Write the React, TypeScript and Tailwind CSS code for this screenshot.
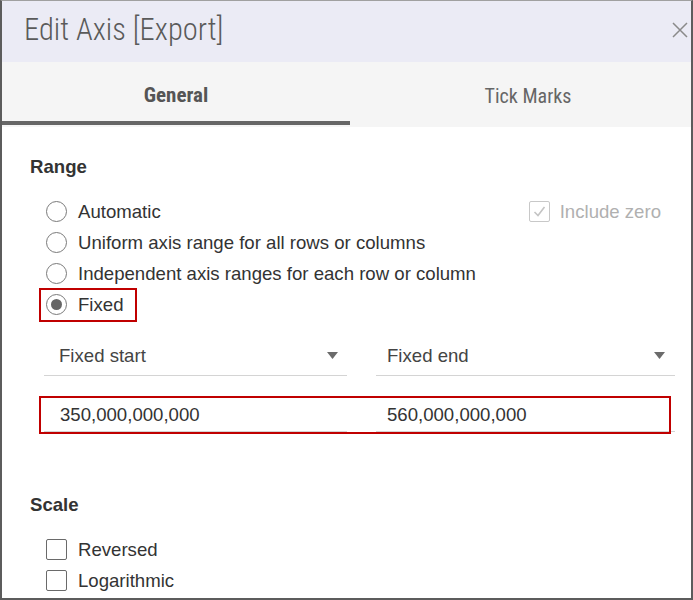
const body = { fontFamily: '"Liberation Sans", Arial, sans-serif' };
const narrow = { fontFamily: '"Liberation Sans Narrow", "Roboto Condensed", Roboto, sans-serif' };

function Radio({ checked }: { checked?: boolean }) {
  return (
    <span className="w-[21px] h-[21px] rounded-full border-[1.5px] border-[#7a7a7a] bg-white flex items-center justify-center shrink-0">
      {checked ? <span className="w-[11px] h-[11px] rounded-full bg-[#666]"></span> : null}
    </span>
  );
}

function Checkbox({ disabled, checked }: { disabled?: boolean; checked?: boolean }) {
  return (
    <span
      className={`w-[21px] h-[21px] rounded-[2px] border-[1.5px] bg-white flex items-center justify-center shrink-0 ${
        disabled ? "border-[#c8c8c8]" : "border-[#6a6a6a]"
      }`}
    >
      {checked ? (
        <svg width="15" height="15" viewBox="0 0 15 15" fill="none">
          <path d="M2.5 8 L6 11.5 L12.5 3" stroke={disabled ? "#c4c4c4" : "#555"} strokeWidth="1.6" />
        </svg>
      ) : null}
    </span>
  );
}

function Caret() {
  return (
    <svg width="11" height="7" viewBox="0 0 11 7">
      <path d="M0 0 L11 0 L5.5 7 Z" fill="#6b6b6b" />
    </svg>
  );
}

export default function App() {
  const radios = [
    "Automatic",
    "Uniform axis range for all rows or columns",
    "Independent axis ranges for each row or column",
  ];

  return (
    <div
      className="w-[693px] h-[600px] bg-white border-2 border-t border-[#5c5c5c] border-t-[#a0a0a0] overflow-hidden flex flex-col"
      style={body}
    >
      {/* header */}
      <div className="h-[61px] bg-[#ebebf5] flex items-center justify-between pl-[22px] pr-[3px] shrink-0">
        <p className="text-[30.5px] font-light text-[#5a5a5a] leading-none -mt-[2px]" style={narrow}>
          Edit Axis [Export]
        </p>
        <svg width="16" height="16" viewBox="0 0 16 16" className="-mt-[4px]">
          <path d="M1 1 L15 15 M15 1 L1 15" stroke="#8a8a8a" strokeWidth="1.5" />
        </svg>
      </div>

      {/* tabs */}
      <div className="h-[65px] bg-[#f5f5f5] flex shrink-0 overflow-hidden">
        <div className="w-[348px] shrink-0 relative flex items-center justify-center">
          <p className="text-[21px] font-bold text-[#555] mt-[2px]" style={narrow}>
            General
          </p>
          <div className="absolute left-0 right-0 bottom-[2px] h-[4px] bg-[#666]"></div>
        </div>
        <div className="w-[356px] shrink-0 flex items-center justify-center">
          <p className="text-[20px] text-[#666] mt-[2px]" style={narrow}>
            Tick Marks
          </p>
        </div>
      </div>

      {/* body */}
      <div className="flex flex-col pt-[29px] pl-[28px] pr-[16px] text-[18.6px] text-[#333]">
        <p className="font-bold leading-[22px]">Range</p>

        <div className="flex flex-col mt-[18px] ml-[16px]">
          {radios.map((label, i) => (
            <div key={i} className="h-[31px] flex items-center justify-between">
              <div className="flex items-center gap-[11px]">
                <Radio />
                <span>{label}</span>
              </div>
              {i === 0 ? (
                <div className="flex items-center gap-[10px] mr-[14px]">
                  <Checkbox disabled checked />
                  <span className="text-[#b0b0b0]">Include zero</span>
                </div>
              ) : null}
            </div>
          ))}
          <div className="h-[31px] flex items-center relative">
            <div className="absolute left-[-7px] top-[-1px] w-[98px] h-[34px] border-2 border-[#c00000]"></div>
            <div className="flex items-center gap-[11px]">
              <Radio checked />
              <span>Fixed</span>
            </div>
          </div>
        </div>

        {/* dropdowns */}
        <div className="flex gap-[29px] ml-[14px] mt-[16px] text-[#444]">
          <div className="w-[303px] shrink-0 h-[40px] flex items-center justify-between pl-[15px] pr-[9px] border-b-[1.5px] border-[#d4d4d4]">
            <span>Fixed start</span>
            <Caret />
          </div>
          <div className="w-[299px] shrink-0 h-[40px] flex items-center justify-between pl-[11px] pr-[10px] border-b-[1.5px] border-[#d4d4d4]">
            <span>Fixed end</span>
            <Caret />
          </div>
        </div>

        {/* values */}
        <div className="relative flex gap-[29px] ml-[14px] mt-[19px]">
          <div className="w-[303px] shrink-0 h-[37px] flex items-center pl-[16px] pt-[3px] border-b-[1.5px] border-[#d4d4d4]">
            <span>350,000,000,000</span>
          </div>
          <div className="w-[299px] shrink-0 h-[37px] flex items-center pl-[11px] pt-[3px] border-b-[1.5px] border-[#d4d4d4]">
            <span>560,000,000,000</span>
          </div>
          <div className="absolute left-[-5px] top-[1px] w-[632px] h-[38px] border-2 border-[#c00000]"></div>
        </div>

        <p className="font-bold leading-[22px] mt-[62px]">Scale</p>

        <div className="flex flex-col mt-[18px] ml-[16px]">
          {["Reversed", "Logarithmic"].map((label) => (
            <div key={label} className="h-[31px] flex items-center gap-[11px]">
              <Checkbox />
              <span>{label}</span>
            </div>
          ))}
        </div>
      </div>
    </div>
  );
}
